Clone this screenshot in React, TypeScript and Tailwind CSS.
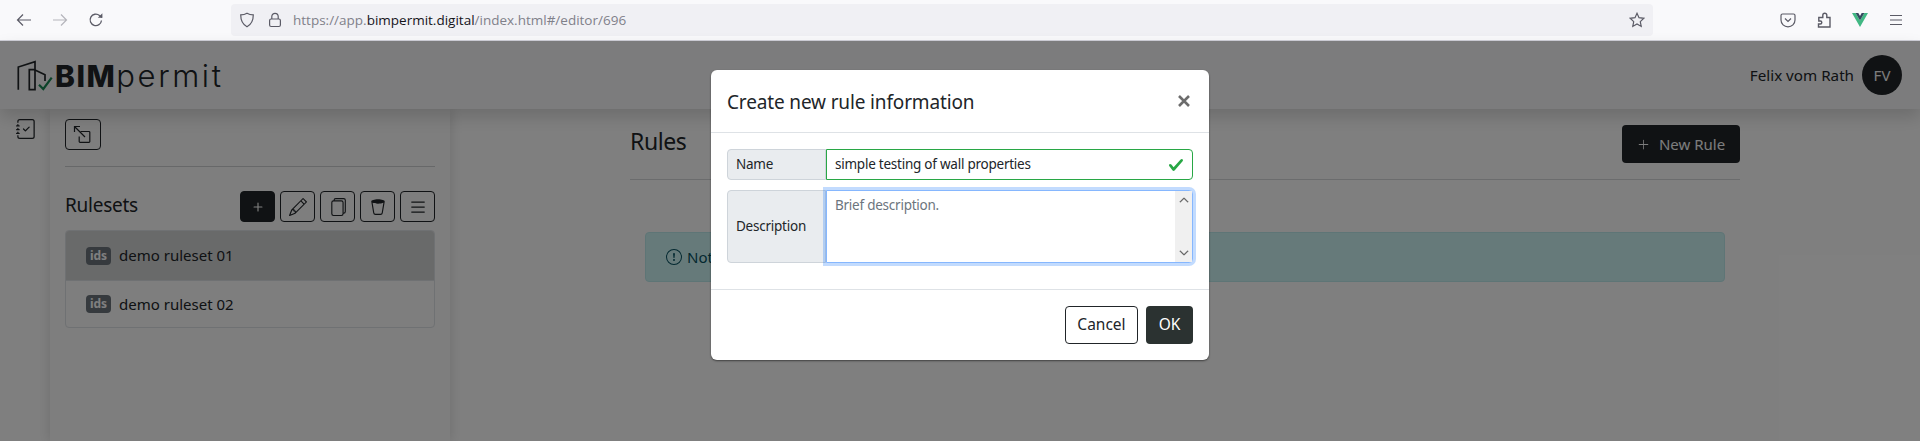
import { BsJournalCheck, BsPencil, BsFiles, BsTrash2, BsList, BsExclamationCircle, BsPlus, BsPlusLg, BsChevronUp, BsChevronDown } from 'react-icons/bs';

const font = "font-['Noto_Sans',sans-serif]";

function BrowserBar() {
  return (
    <div className="h-[41px] shrink-0 bg-[#f9f9fb] border-b border-[#cfcfd8] flex items-center font-['Open_Sans',sans-serif]">
      <div className="w-[231px] flex items-center pl-[16px] gap-[20px] text-[#5b5b66]">
        <svg width="16" height="16" viewBox="0 0 16 16" fill="none" stroke="currentColor" strokeWidth="1.2">
          <path d="M15 8H1.5M7 2.5 1.5 8 7 13.5" />
        </svg>
        <svg width="16" height="16" viewBox="0 0 16 16" fill="none" stroke="#b5b5bb" strokeWidth="1.2">
          <path d="M1 8h13.5M9 2.5 14.5 8 9 13.5" />
        </svg>
        <svg width="16" height="16" viewBox="0 0 16 16" fill="none" stroke="currentColor" strokeWidth="1.3">
          <path d="M13.5 8.5A5.7 5.7 0 1 1 11.5 3.5L14 5.5" />
          <path d="M14.4 1.2v4.6H9.8" fill="currentColor" stroke="none" />
        </svg>
      </div>
      <div className="w-[1422px] h-[32px] bg-[#f0f0f4] rounded-[4px] flex items-center pl-[8px] pr-[8px] text-[#5b5b66]">
        <svg width="16" height="16" viewBox="0 0 16 16" fill="none" stroke="currentColor" strokeWidth="1.2">
          <path d="M8 1.2c2 1.2 4 1.6 6.3 1.6 0 5.500-2 9.700-6.300 12-4.300-2.300-6.300-6.500-6.300-12C4 2.800 6 2.400 8 1.200Z" />
        </svg>
        <svg className="ml-[12px]" width="16" height="16" viewBox="0 0 16 16" fill="none" stroke="currentColor" strokeWidth="1.2">
          <rect x="2.600" y="7" width="10.800" height="7.500" rx="1.500" />
          <path d="M4.800 7V4.500a3.200 3.200 0 0 1 6.400 0V7" />
        </svg>
        <div className="ml-[10px] text-[13.5px] text-[#80808a] whitespace-nowrap">
          https://app.<span className="text-[#15141a]">bimpermit.digital</span>/index.html#/editor/696
        </div>
        <svg className="ml-auto" width="16" height="16" viewBox="0 0 16 16" fill="none" stroke="currentColor" strokeWidth="1.2">
          <path d="m8 1.300 2 4.400 4.800.6-3.500 3.300.9 4.800L8 12l-4.200 2.400.9-4.800L1.200 6.300 6 5.700Z" />
        </svg>
      </div>
      <div className="flex-1 flex items-center pl-[127px] gap-[20px] text-[#5b5b66]">
        <svg width="16" height="16" viewBox="0 0 16 16" fill="none" stroke="currentColor" strokeWidth="1.200">
          <path d="M2.500 2h11A1.500 1.500 0 0 1 15 3.500V8A7 6.800 0 0 1 1 8V3.500A1.500 1.500 0 0 1 2.500 2Z" />
          <path d="m5 6.500 3 3 3-3" />
        </svg>
        <svg width="16" height="16" viewBox="0 0 16 16" fill="none" stroke="currentColor" strokeWidth="1.400">
          <path d="M2.500 15H14V5.500H10.800V3.200A2 2 0 0 0 6.800 3.200V5.500H2.800V9H4.300A1.500 1.500 0 0 1 4.300 12H2.500Z" />
        </svg>
        <svg width="16" height="14" viewBox="0 0 16 14">
          <path d="M0 0h3.600L8 7.400 12.400 0H16L8 14Z" fill="#41b883" />
          <path d="M3.600 0h2.700L8 2.900 9.700 0h2.700L8 7.400Z" fill="#34495e" />
        </svg>
        <svg width="16" height="16" viewBox="0 0 16 16" fill="none" stroke="currentColor" strokeWidth="1.200">
          <path d="M2 3.500h12M2 8h12M2 12.500h12" />
        </svg>
      </div>
    </div>
  );
}

function Logo() {
  return (
    <div className="flex items-center">
      <svg width="36" height="32" viewBox="0 0 36 32" fill="none" className="shrink-0">
        <path d="M1.300 30.700V8L18 2.700V30.700H12.300V10.700H18" stroke="#212529" strokeWidth="1.700" />
        <path d="M18 11 28 15.700V22" stroke="#212529" strokeWidth="1.700" />
        <path d="M22 25.700 26.300 30 34.700 18.700" stroke="#198754" strokeWidth="2.200" />
      </svg>
      <div className="font-['Inter',sans-serif] text-[#212529] text-[30px] leading-none ml-[2px] mt-[1px] whitespace-nowrap">
        <span className="font-extrabold tracking-[1.5px]">BIM</span>
        <span className="font-light text-[31px] tracking-[2.6px]">permit</span>
      </div>
    </div>
  );
}

function Navbar() {
  return (
    <div className="h-[68px] shrink-0 bg-[#f8f9fa] shadow-[0_8px_16px_rgba(0,0,0,0.15)] relative z-10 flex items-center justify-between pl-[17px] pr-[18px]">
      <Logo />
      <div className="flex items-center gap-[8px]">
        <span className="text-[15.2px] text-[#212529]">Felix vom Rath</span>
        <div className="w-[40px] h-[40px] rounded-full bg-[#212529] text-[#f8f9fa] flex items-center justify-center text-[15px]">FV</div>
      </div>
    </div>
  );
}

function IconButton({ children, dark }: { children: React.ReactNode; dark?: boolean }) {
  return (
    <button className={`w-[35px] h-[31px] rounded-[4px] border border-[#212529] flex items-center justify-center ${dark ? 'bg-[#212529] text-white' : 'text-[#212529]'}`}>
      {children}
    </button>
  );
}

function RulesetItem({ name, active }: { name: string; active?: boolean }) {
  return (
    <div className={`flex items-center pl-[20px] gap-[8px] text-[15px] text-[#212529] ${active ? 'h-[49px] bg-[#d3d4d5]' : 'h-[47px] border-t border-[#dee2e6]'}`}>
      <span className="w-[25px] h-[18px] rounded-[4px] bg-[#6c757d] text-white text-[12px] font-bold flex items-center justify-center leading-none">ids</span>
      {name}
    </div>
  );
}

function Sidebar() {
  return (
    <div className="w-[400px] shrink-0 h-full bg-[#fcfcfc] shadow-[0_0_12px_rgba(0,0,0,0.15)] px-[15px] pt-[10px]">
      <button className="w-[36px] h-[31px] rounded-[4px] border border-[#212529] flex items-center justify-center text-[#212529]">
        <svg width="20" height="20" viewBox="0 0 20 20" fill="none" stroke="currentColor" strokeWidth="1.200">
          <path d="M8 7h8.500a.8.8 0 0 1 .8.800V17a.8.8 0 0 1-.8.800H7.500a.8.8 0 0 1-.8-.800v-5" transform="translate(-0.500 -0.500)" />
          <path d="M1.500 1.500 12 12M1.500 7V1.500H7" />
        </svg>
      </button>
      <div className="h-px bg-[#ced0d2] mt-[16px]" />
      <div className="flex items-center justify-between mt-[24px]">
        <h2 className="text-[19px] tracking-[-0.25px] -mt-[2px] text-[#212529]">Rulesets</h2>
        <div className="flex gap-[5px]">
          <IconButton dark><BsPlus size={18} /></IconButton>
          <IconButton><BsPencil size={18} /></IconButton>
          <IconButton><BsFiles size={18} /></IconButton>
          <IconButton><BsTrash2 size={18} /></IconButton>
          <IconButton><BsList size={20} /></IconButton>
        </div>
      </div>
      <div className="mt-[8px] rounded-[4px] border border-[#dee2e6] overflow-hidden">
        <RulesetItem name="demo ruleset 01" active />
        <RulesetItem name="demo ruleset 02" />
      </div>
    </div>
  );
}

function Content() {
  return (
    <div className="flex-1 pl-[180px] pr-[180px] pt-[16px]">
      <div className="flex items-center justify-between h-[38px] text-[#212529]">
        <h2 className="text-[23px] tracking-[-0.4px] -mt-[5px]">Rules</h2>
        <button className="w-[118px] h-[38px] rounded-[4px] bg-[#212529] text-[#f8f9fa] flex items-center justify-center gap-[9px] text-[15px]">
          <BsPlusLg size={13} />
          New Rule
        </button>
      </div>
      <div className="h-px bg-[#d6d8da] mt-[16px]" />
      <div className="mx-[15px] mt-[52px] h-[50px] rounded-[4px] bg-[#cdf4f5] border border-[#bdebec] text-[#055160] flex items-center pl-[20px] gap-[5px] text-[15px]">
        <BsExclamationCircle size={16} />
        Not
      </div>
    </div>
  );
}

function Modal() {
  return (
    <div className="absolute left-[711px] top-[70px] w-[498px] h-[290px] bg-white rounded-[6px] shadow-[0_1px_2px_rgba(0,0,0,0.5)] flex flex-col text-[#212529]">
      <div className="h-[63px] shrink-0 border-b border-[#dee2e6] flex items-center justify-between pl-[16px] pr-[19px]">
        <h3 className="text-[19px] tracking-[-0.15px] mt-[3px]">Create new rule information</h3>
        <svg width="12" height="12" viewBox="0 0 12 12" stroke="#6c6c6c" strokeWidth="2.600" className="-mt-[1px]">
          <path d="M1 1 11 11M11 1 1 11" />
        </svg>
      </div>
      <div className="px-[16px] pt-[16px] flex flex-col gap-[10px] h-[157px] shrink-0 border-b border-[#dee2e6] text-[13.5px] tracking-[-0.24px]">
        <div className="flex h-[31px]">
          <div className="w-[99px] bg-[#e9ecef] border border-[#ced4da] rounded-l-[4px] pl-[8px] flex items-center text-[#212529]">Name</div>
          <div className="flex-1 border border-[#28a745] rounded-r-[4px] flex items-center justify-between pl-[8px] pr-[8px]">
            simple testing of wall properties
            <svg width="16" height="16" viewBox="0 0 8 8">
              <path fill="#28a745" d="M2.300 6.730.6 4.530c-.4-1.040.46-1.400 1.100-.8l1.100 1.400 3.400-3.800c.6-.63 1.600-.27 1.200.7l-4 4.600c-.43.5-.8.4-1.100.1z" />
            </svg>
          </div>
        </div>
        <div className="flex h-[73px]">
          <div className="w-[99px] bg-[#e9ecef] border border-[#ced4da] rounded-l-[4px] pl-[8px] flex items-center">Description</div>
          <div className="flex-1 relative z-10 border border-[#86b7fe] rounded-r-[4px] bg-white shadow-[0_0_0_3px_rgba(13,110,253,0.25)] flex">
            <span className="flex-1 pl-[8px] pt-[4px] text-[#6c757d]">Brief description.</span>
            <div className="w-[17px] bg-[#f0f0f0] flex flex-col items-center justify-between py-[4px] text-[#505050]">
              <BsChevronUp size={10} className="stroke-1" />
              <BsChevronDown size={10} className="stroke-1" />
            </div>
          </div>
        </div>
      </div>
      <div className="flex-1 flex items-center justify-end gap-[8px] pr-[16px] text-[15.5px]">
        <button className="w-[73px] h-[38px] rounded-[4px] border border-[#212529] text-[#212529]">Cancel</button>
        <button className="w-[47px] h-[38px] rounded-[4px] bg-[#2b3231] text-white">OK</button>
      </div>
    </div>
  );
}

export default function App() {
  return (
    <div className={`h-screen w-full overflow-hidden flex flex-col relative bg-white ${font}`}>
      <BrowserBar />
      <div className="flex-1 relative flex flex-col min-h-0">
        <Navbar />
        <div className="flex-1 flex min-h-0">
          <div className="w-[50px] shrink-0 pl-[16px] pt-[10px] text-[#212529]">
            <BsJournalCheck size={20} />
          </div>
          <Sidebar />
          <Content />
        </div>
        <div className="absolute inset-0 z-20 bg-black/50" />
      </div>
      <div className="absolute inset-0 z-30">
        <Modal />
      </div>
    </div>
  );
}
